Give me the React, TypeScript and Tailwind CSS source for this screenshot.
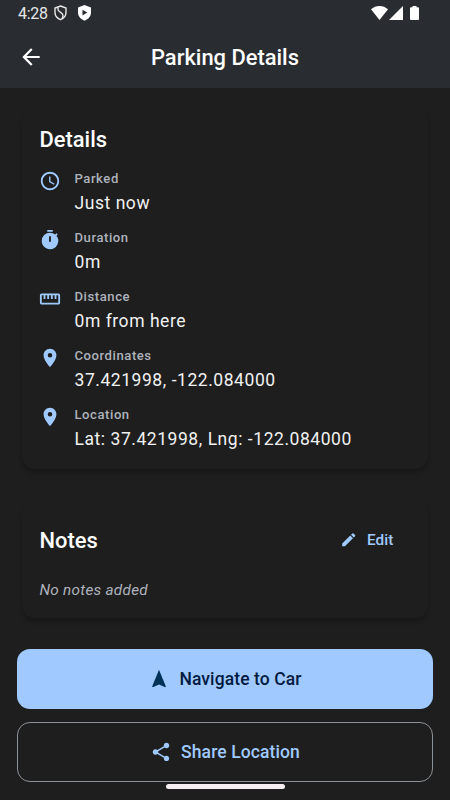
import type { ReactNode } from "react";
import type { IconType } from "react-icons";
import {
  MdAccessTime,
  MdArrowBack,
  MdEdit,
  MdLocationOn,
  MdNavigation,
  MdShare,
  MdStraighten,
  MdTimer,
} from "react-icons/md";

interface Detail {
  icon: IconType;
  label: string;
  value: string;
}

const details: Detail[] = [
  { icon: MdAccessTime, label: "Parked", value: "Just now" },
  { icon: MdTimer, label: "Duration", value: "0m" },
  { icon: MdStraighten, label: "Distance", value: "0m from here" },
  { icon: MdLocationOn, label: "Coordinates", value: "37.421998, -122.084000" },
  { icon: MdLocationOn, label: "Location", value: "Lat: 37.421998, Lng: -122.084000" },
];

function StatusBar() {
  return (
    <div className="flex h-[26px] items-center justify-between pl-[18px] pr-[31px] text-white">
      <div className="flex items-center">
        <span className="w-[35.5px] pt-px text-[16px] leading-none tracking-[-0.3px] text-[#e6e7e8]">4:28</span>
        <svg width="13" height="16" viewBox="0 0 13 16" fill="none" stroke="#e6e7e8" strokeWidth="1.4">
          <path d="M6.5 1L12 3v4.500c0 3.200-2.200 5.800-5.500 7.200C3.200 13.300 1 10.700 1 7.500V3z" />
          <path d="M4 2.200v2.300c0 2.600 5 2.800 5 6 0 1-.3 1.700-.8 2.500" />
        </svg>
        <svg className="ml-[11px]" width="13" height="16" viewBox="0 0 13 16">
          <path fill="currentColor" d="M6.500 0L13 2.500v5c0 3.700-2.600 6.800-6.500 8.200C2.600 14.300 0 11.200 0 7.500v-5z" />
          <path fill="#292c31" d="M4.500 4.700v5.800L9.300 7.600z" />
        </svg>
      </div>
      <div className="flex items-center">
        <svg width="17" height="14" viewBox="0 0 17 14" fill="currentColor">
          <path d="M0 3.300C2.400 1.200 5.300 0 8.500 0S14.600 1.200 17 3.300L8.500 14z" />
        </svg>
        <svg className="ml-px" width="14" height="14" viewBox="0 0 14 14" fill="currentColor">
          <path d="M14 0v14H0z" />
        </svg>
        <svg className="ml-[7px]" width="9" height="14" viewBox="0 0 9 14" fill="currentColor">
          <path d="M2.500 0h4v1.200H8a1 1 0 0 1 1 1V13a1 1 0 0 1-1 1H1a1 1 0 0 1-1-1V2.200a1 1 0 0 1 1-1h1.500z" />
        </svg>
      </div>
    </div>
  );
}

function Card({ className, children }: { className: string; children: ReactNode }) {
  return (
    <section
      className={`mx-[22px] rounded-[13px] bg-[#1e1e1e] px-[17.5px] shadow-[0_4px_4px_0_rgba(0,0,0,0.2)] ${className}`}
    >
      {children}
    </section>
  );
}

function DetailRow({ icon: Icon, label, value }: Detail) {
  return (
    <li className="flex h-[59px] items-start gap-[13.5px]">
      <Icon size={22} className="-ml-[0.5px] shrink-0 text-[#a0caff]" />
      <div>
        <p className="text-[13.1px] font-medium leading-[17.5px] tracking-[0.55px] text-[#aeb2bb]">{label}</p>
        <p className="mt-[2px] text-[17.5px] leading-[26px] tracking-[0.55px] text-[#f1f1f1]">{value}</p>
      </div>
    </li>
  );
}

export default function App() {
  return (
    <div className="flex h-[800px] w-[450px] flex-col overflow-hidden bg-[#1e1e1e] font-['Roboto',sans-serif]">
      <header className="h-[87.5px] shrink-0 bg-[#292c31] text-white">
        <StatusBar />
        <div className="relative flex h-[63px] items-center justify-center">
          <button aria-label="Back" className="absolute left-[18px] top-[18px]">
            <MdArrowBack size={26} />
          </button>
          <h1 className="text-[21.9px] font-medium leading-none">Parking Details</h1>
        </div>
      </header>

      <main className="flex flex-1 flex-col">
        <Card className="mt-[21.5px] h-[360px] pt-[18px]">
          <h2 className="text-[21.9px] font-medium leading-[26px] text-white">Details</h2>
          <ul className="mt-[17px]">
            {details.map((d) => (
              <DetailRow key={d.label} {...d} />
            ))}
          </ul>
        </Card>

        <Card className="mt-[31px] h-[118px] pt-[17px]">
          <div className="flex h-[46px] items-center justify-between">
            <h2 className="pt-[2px] text-[21.9px] font-medium leading-none text-white">Notes</h2>
            <button className="mr-[17px] flex items-center gap-[9px] text-[15.3px] font-medium tracking-[0.1px] text-[#a0caff]">
              <MdEdit size={17.5} />
              Edit
            </button>
          </div>
          <p className="mt-[15px] text-[15.3px] italic leading-[24px] tracking-[0.27px] text-[#aeb2bb]">
            No notes added
          </p>
        </Card>

        <div className="mt-[31px] flex flex-col gap-[13px] px-[17px]">
          <button className="flex h-[60px] items-center justify-center gap-[9px] rounded-[13px] bg-[#a0caff] text-[17.5px] font-medium tracking-[0.1px] text-[#001a41]">
            <MdNavigation size={22} className="text-[#003258]" />
            Navigate to Car
          </button>
          <button className="flex h-[60px] items-center justify-center gap-[9px] rounded-[13px] border border-[#8b9198] text-[17.5px] font-medium tracking-[0.1px] text-[#a0caff]">
            <MdShare size={22} />
            Share Location
          </button>
        </div>
        <div className="mx-auto mt-[2px] h-[5px] w-[119px] rounded-full bg-[#f5eef2]" />
      </main>
    </div>
  );
}
